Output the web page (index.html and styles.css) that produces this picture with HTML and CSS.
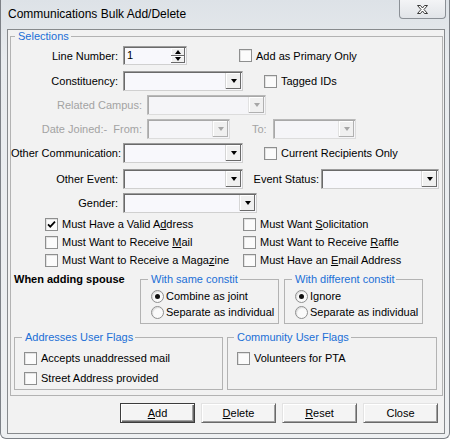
FILE: index.html
```html
<!DOCTYPE html>
<html>
<head>
<meta charset="utf-8">
<title>Communications Bulk Add/Delete</title>
<link rel="stylesheet" href="styles.css">
</head>
<body>
<div class="window">
  <div class="titlebar">
    <span class="title">Communications Bulk Add/Delete</span>
    <div class="close-btn">
      <svg width="13" height="11" viewBox="0 0 13 11"><path d="M1.5 1.5h3l2 2.5 2-2.5h3l-3.5 4 3.5 4h-3l-2-2.5-2 2.5h-3l3.5-4z" fill="#fff" stroke="#3b3b3b" stroke-width="1" stroke-linejoin="round"/></svg>
    </div>
  </div>
  <div class="client">
    <fieldset class="group selections">
      <legend>Selections</legend>

      <div class="row r1">
        <span class="lbl lw-a">Line Number:</span>
        <div class="field spin">
          <span class="val">1</span>
          <div class="spin-btns">
            <span class="sb"><i class="arr up"></i></span>
            <span class="sb"><i class="arr"></i></span>
          </div>
        </div>
        <label class="chk ml-52"><span class="box"></span><span>Add as Primary Only</span></label>
      </div>

      <div class="row r2">
        <span class="lbl lw-a">Constituency:</span>
        <div class="field combo cw-120"><span class="dd"><i class="arr"></i></span></div>
        <label class="chk ml-21"><span class="box"></span><span>Tagged IDs</span></label>
      </div>

      <div class="row">
        <span class="lbl lw-b disabled">Related Campus:</span>
        <div class="field combo off cw-119"><span class="dd"><i class="arr"></i></span></div>
      </div>

      <div class="row">
        <span class="lbl lw-b disabled">Date Joined:-&nbsp; From:</span>
        <div class="field combo off cw-83"><span class="dd"><i class="arr"></i></span></div>
        <span class="lbl-to disabled">To:</span>
        <div class="field combo off cw-83"><span class="dd"><i class="arr"></i></span></div>
      </div>

      <div class="row">
        <span class="lbl lw-a">Other Communication:</span>
        <div class="field combo cw-120"><span class="dd"><i class="arr"></i></span></div>
        <label class="chk ml-21"><span class="box"></span><span>Current Recipients Only</span></label>
      </div>

      <div class="row r6">
        <span class="lbl lw-a">Other Event:</span>
        <div class="field combo cw-120"><span class="dd"><i class="arr"></i></span></div>
        <span class="lbl lbl-status">Event Status:</span>
        <div class="field combo cw-118"><span class="dd"><i class="arr"></i></span></div>
      </div>

      <div class="row">
        <span class="lbl lw-a">Gender:</span>
        <div class="field combo cw-134"><span class="dd"><i class="arr"></i></span></div>
      </div>

      <div class="checks">
        <label class="chk"><span class="box"><svg width="9" height="9" viewBox="0 0 9 9"><path d="M1 4.3l2.3 2.4L8 1.6" fill="none" stroke="#000" stroke-width="1.7"/></svg></span><span>Must Have a Valid A<u>d</u>dress</span></label>
        <label class="chk"><span class="box"></span><span>Must Want <u>S</u>olicitation</span></label>
        <label class="chk"><span class="box"></span><span>Must Want to Receive <u>M</u>ail</span></label>
        <label class="chk"><span class="box"></span><span>Must Want to Receive <u>R</u>affle</span></label>
        <label class="chk"><span class="box"></span><span>Must Want to Receive a Maga<u>z</u>ine</span></label>
        <label class="chk"><span class="box"></span><span>Must Have an <u>E</u>mail Address</span></label>
      </div>

      <div class="spouse">
        <span class="spouse-lbl">When adding spouse</span>
        <fieldset class="group sub">
          <legend>With same constit</legend>
          <label class="opt"><span class="radio on"></span><span>Combine as joint</span></label>
          <label class="opt"><span class="radio"></span><span>Separate as individual</span></label>
        </fieldset>
        <fieldset class="group sub">
          <legend>With different constit</legend>
          <label class="opt"><span class="radio on"></span><span>Ignore</span></label>
          <label class="opt"><span class="radio"></span><span>Separate as individual</span></label>
        </fieldset>
      </div>

      <div class="flags">
        <fieldset class="group flag-grp grp-a">
          <legend>Addresses User Flags</legend>
          <label class="chk flag"><span class="box"></span><span>Accepts unaddressed mail</span></label>
          <label class="chk flag"><span class="box"></span><span>Street Address provided</span></label>
        </fieldset>
        <fieldset class="group flag-grp grp-b">
          <legend>Community User Flags</legend>
          <label class="chk flag"><span class="box"></span><span>Volunteers for PTA</span></label>
        </fieldset>
      </div>
    </fieldset>

    <div class="buttons">
      <button class="btn default"><span><u>A</u>dd</span></button>
      <button class="btn"><span><u>D</u>elete</span></button>
      <button class="btn"><span><u>R</u>eset</span></button>
      <button class="btn"><span>Close</span></button>
    </div>
  </div>
</div>
</body>
</html>
```

FILE: styles.css
```css
* { box-sizing: border-box; }

html, body { margin: 0; padding: 0; }

body {
  font-family: "Liberation Sans", Arial, sans-serif;
  font-size: 11px;
  color: #000;
  background: #ffffff;
}

.window {
  width: 450px;
  height: 439px;
  background: linear-gradient(#dde2e7, #e8ebee 60px, #eef0f2);
  border: 1px solid #7d8187;
  border-top: 0;
  border-radius: 0 0 6px 6px;
  display: flex;
  flex-direction: column;
}

.titlebar {
  height: 29px;
  flex: none;
  display: flex;
  align-items: flex-start;
  justify-content: space-between;
  padding-left: 7px;
}

.title {
  font-size: 12px;
  line-height: 29px;
  color: #000;
}

.close-btn {
  width: 47px;
  height: 19px;
  margin-right: 3px;
  border: 1px solid #8b9096;
  border-top: 0;
  border-radius: 0 0 4px 4px;
  background: linear-gradient(#f3f4f6, #e1e4e8);
  display: flex;
  align-items: center;
  justify-content: center;
}

.client {
  margin-left: 6px;
  width: 438px;
  height: 405px;
  flex: none;
  border: 1px solid #878a8d;
  background: #f2f2f2;
  display: flex;
  flex-direction: column;
}

/* group boxes */
fieldset { margin: 0; min-width: 0; }

.group {
  border: 1px solid #b3b3b3;
  padding: 0;
}

.group > legend {
  padding: 0 2px 0 3px;
  line-height: 13px;
  color: #1b6fd6;
}

.selections {
  margin: 0 1px 0 2px;
  padding: 3px 0 5px 0;
}

.selections > legend { margin-left: 4px; }

/* form rows */
.row {
  display: flex;
  align-items: center;
  height: 20px;
  margin-top: 4px;
}

.r1 { height: 19px; margin-top: 0; }
.r2, .r6 { margin-top: 6px; }

.lbl { flex: none; text-align: right; white-space: nowrap; }
.lw-a { width: 107px; margin-right: 5px; }
.lw-b { width: 131px; margin-right: 5px; }
.disabled { color: #a3a3a3; }

.lbl-to { flex: none; width: 16px; margin: 0 5px 0 22px; }
.lbl-status { width: 68px; margin: 0 2px 0 8px; }

/* sunken fields */
.field {
  flex: none;
  height: 20px;
  display: flex;
  padding: 1px;
  border: 1px solid;
  border-color: #9c9c9c #d0d0d0 #d0d0d0 #9c9c9c;
  box-shadow: inset 1px 1px 0 #6a6a6a;
  background: #f8f8fc;
}

.cw-120 { width: 120px; }
.cw-119 { width: 119px; }
.cw-83 { width: 83px; }
.cw-118 { width: 118px; }
.cw-134 { width: 134px; }

.dd {
  margin-left: auto;
  width: 16px;
  height: 100%;
  display: flex;
  align-items: center;
  justify-content: center;
  background: #f0f0f0;
  border-left: 1px solid #d6d6d6;
  box-shadow: inset -1px -1px 0 #6a6a6a, inset 1px 1px 0 #ffffff;
}

.arr {
  display: block;
  width: 1px;
  height: 0;
  border-left: 3px solid transparent;
  border-right: 3px solid transparent;
  border-top: 4px solid #000;
}

.arr.up {
  border-top: 0;
  border-bottom: 4px solid #000;
}

.combo.off {
  border-color: #b9b9b9 #dcdcdc #dcdcdc #b9b9b9;
  box-shadow: inset 1px 1px 0 #a8a8a8;
  background: #f5f5f8;
}

.combo.off .dd {
  border-left-color: #e2e2e2;
  box-shadow: inset -1px -1px 0 #b0b0b0, inset 1px 1px 0 #ffffff;
}

.combo.off .arr { border-top-color: #a6a6a6; }

/* spinner */
.spin { width: 64px; height: 19px; }

.val { padding-left: 2px; line-height: 15px; }

.spin-btns {
  margin-left: auto;
  width: 14px;
  display: flex;
  flex-direction: column;
}

.sb {
  flex: 1;
  display: flex;
  align-items: center;
  justify-content: center;
  background: #f0f0f0;
  box-shadow: inset -1px -1px 0 #6a6a6a, inset 1px 1px 0 #ffffff;
}

/* checkboxes */
.chk {
  flex: none;
  display: flex;
  align-items: center;
  white-space: nowrap;
}

.ml-52 { margin-left: 52px; }
.ml-21 { margin-left: 21px; }

.box {
  flex: none;
  width: 13px;
  height: 13px;
  margin-right: 4px;
  border: 1px solid #8e8f8f;
  background: #fbfbfb;
  box-shadow: inset 1px 1px 0 #e2e2e2;
  display: flex;
  align-items: center;
  justify-content: center;
}

.checks {
  display: grid;
  grid-template-columns: 198px auto;
  grid-auto-rows: 18px;
  margin: 2px 0 0 34px;
}

/* spouse */
.spouse {
  display: flex;
  align-items: flex-start;
  margin: 4px 0 0 3px;
}

.spouse-lbl {
  flex: none;
  width: 126px;
  font-weight: bold;
  line-height: 13px;
}

.sub {
  flex: none;
  width: 139px;
  padding: 2px 0 3px 0;
}

.sub + .sub { margin-left: 5px; }
.sub > legend { margin-left: 7px; }

.opt {
  display: flex;
  align-items: center;
  height: 16px;
  margin-left: 10px;
  white-space: nowrap;
}

.radio {
  flex: none;
  width: 13px;
  height: 13px;
  margin-right: 2px;
  border-radius: 50%;
  border: 1px solid #8e8f8f;
  background: #fafafa;
  box-shadow: inset 1px 1px 1px #dcdcdc;
  display: flex;
  align-items: center;
  justify-content: center;
}

.radio.on::before {
  content: "";
  width: 5px;
  height: 5px;
  border-radius: 50%;
  background: #111;
}

/* user flags */
.flags {
  display: flex;
  align-items: flex-start;
  margin: 7px 0 0 3px;
}

.flag-grp { flex: none; height: 59px; padding: 4px 0 1px 0; }
.grp-a { width: 209px; }
.grp-a > legend { margin-left: 7px; }
.grp-b { width: 210px; margin-left: 4px; }
.grp-b > legend { margin-left: 6px; }

.flag { height: 20px; margin-left: 9px; }

/* buttons */
.buttons {
  display: flex;
  justify-content: flex-end;
  gap: 6px;
  margin-top: 7px;
  padding-right: 6px;
}

.btn {
  width: 75px;
  height: 20px;
  margin: 0;
  padding: 0;
  font-family: inherit;
  font-size: 11px;
  color: #000;
  background: #f4f4f4;
  border: 1px solid;
  border-color: #e3e3e3 #696969 #696969 #e3e3e3;
  box-shadow: inset 1px 1px 0 #ffffff, inset -1px -1px 0 #a0a0a0;
  display: flex;
  align-items: center;
  justify-content: center;
}

.btn.default {
  border-color: #3c3c3c;
  box-shadow: inset 1px 1px 0 #ffffff, inset -1px -1px 0 #696969, inset -2px -2px 0 #a0a0a0;
}
```
